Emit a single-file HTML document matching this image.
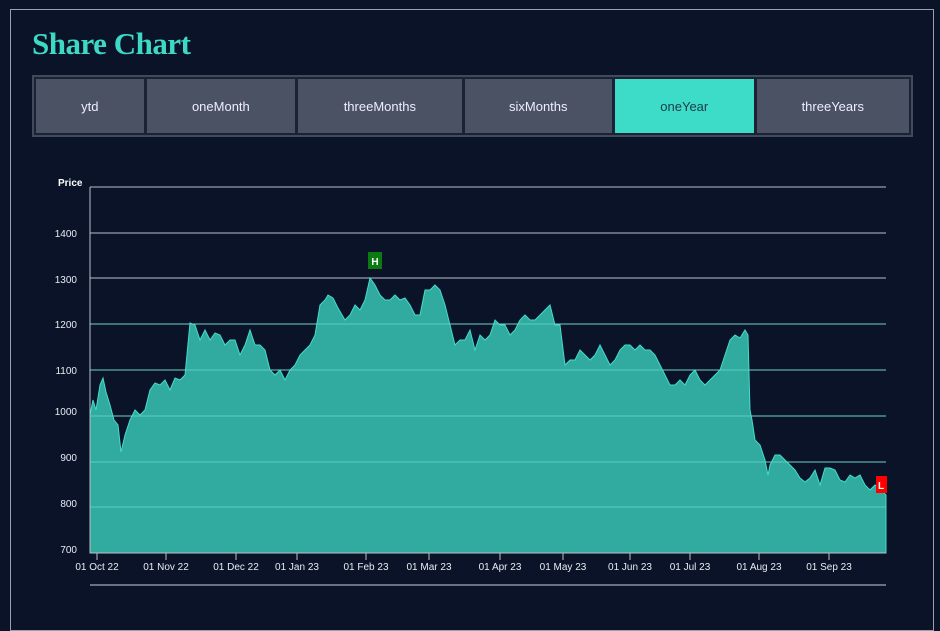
<!DOCTYPE html>
<html><head><style>
body{margin:0;background:#0a1328;width:940px;height:599px;overflow:hidden;font-family:"Liberation Sans",sans-serif}
.frame{position:absolute;left:10px;top:9px;width:922px;height:620px;border:1px solid #9aa1ad}
h1{position:absolute;left:32px;top:26px;margin:0;font-family:"Liberation Serif",serif;font-weight:bold;font-size:31px;color:#3dd9c4;letter-spacing:-0.5px}
.tabs{position:absolute;left:32px;top:75px;width:875px;height:56px;border:2px solid #3f4a5c;background:#1a2233;display:flex;gap:1px;padding:1px}
.tabs div{background:#4a5263;color:#eef;font-size:13px;display:flex;align-items:center;justify-content:center;border:1px solid #1a2233}
.tabs .on{background:#3ddcc9;color:#1f3a44}
</style></head><body>
<div class="frame"></div>
<h1>Share Chart</h1>
<div class="tabs">
<div style="width:108px">ytd</div><div style="width:149px">oneMonth</div><div style="width:164px">threeMonths</div><div style="width:148px">sixMonths</div><div class="on" style="width:139px">oneYear</div><div style="width:153px">threeYears</div>
</div>
<svg width="940" height="599" style="position:absolute;left:0;top:0" font-family="Liberation Sans,sans-serif">
<g stroke="#b9c0cc" stroke-width="1">
<line x1="90" y1="187" x2="886" y2="187"/><line x1="90" y1="233" x2="886" y2="233"/><line x1="90" y1="278" x2="886" y2="278"/><line x1="90" y1="324" x2="886" y2="324"/><line x1="90" y1="370" x2="886" y2="370"/><line x1="90" y1="416" x2="886" y2="416"/><line x1="90" y1="462" x2="886" y2="462"/><line x1="90" y1="507" x2="886" y2="507"/>
</g>
<path fill="#31aba0" stroke="#44dccb" stroke-width="1" d="M90,553 L90,415 93,400 96,410 100,385 103,378 106,392 110,405 114,420 118,425 121,452 125,435 130,420 135,410 140,415 145,410 150,390 155,383 160,385 165,380 170,390 175,378 180,380 185,375 190,323 195,325 200,340 205,330 210,340 215,333 220,335 225,345 230,340 235,340 240,355 245,345 250,330 255,345 260,345 265,350 270,370 275,375 280,370 285,380 290,370 295,365 300,355 305,350 310,345 315,335 320,305 325,300 328,295 333,298 338,308 345,320 350,315 355,305 360,310 365,300 370,278 375,285 380,295 385,300 390,300 395,295 400,300 405,298 410,305 415,315 420,315 425,290 430,290 435,285 440,290 445,305 450,325 455,345 460,340 465,340 470,330 475,350 480,335 485,340 490,335 495,320 500,325 505,325 510,335 515,330 520,320 525,315 530,320 535,320 540,315 545,310 550,305 555,325 560,325 565,365 570,360 575,360 580,350 585,355 590,360 595,355 600,345 605,355 610,365 615,360 620,350 625,345 630,345 635,350 640,345 645,350 650,350 655,355 660,365 665,375 670,385 675,385 680,380 685,385 690,375 695,370 700,380 705,385 710,380 715,375 720,370 725,355 730,340 735,335 740,338 745,330 748,335 750,410 752,420 755,440 760,445 765,460 768,475 770,465 775,455 780,455 785,460 790,465 795,470 800,478 805,482 810,478 815,470 820,485 825,468 830,468 835,470 840,480 845,482 850,475 855,478 860,475 865,485 870,490 875,485 880,490 883,492 886,495 L886,553 Z"/>
<g stroke="#62d6ca" stroke-width="1" opacity="0.8">
<line x1="90" y1="416" x2="886" y2="416"/><line x1="90" y1="462" x2="886" y2="462"/><line x1="90" y1="507" x2="886" y2="507"/><line x1="90" y1="370" x2="886" y2="370"/><line x1="90" y1="324" x2="886" y2="324"/>
</g>
<line x1="90" y1="187" x2="90" y2="553" stroke="#b9c0cc"/>
<line x1="90" y1="553" x2="886" y2="553" stroke="#b9c0cc"/>
<line x1="90" y1="585" x2="886" y2="585" stroke="#8a92a0" stroke-width="1.5"/>
<g stroke="#b9c0cc"><line x1="97" y1="553" x2="97" y2="560"/><line x1="166" y1="553" x2="166" y2="560"/><line x1="236" y1="553" x2="236" y2="560"/><line x1="297" y1="553" x2="297" y2="560"/><line x1="366" y1="553" x2="366" y2="560"/><line x1="429" y1="553" x2="429" y2="560"/><line x1="500" y1="553" x2="500" y2="560"/><line x1="563" y1="553" x2="563" y2="560"/><line x1="630" y1="553" x2="630" y2="560"/><line x1="690" y1="553" x2="690" y2="560"/><line x1="759" y1="553" x2="759" y2="560"/><line x1="829" y1="553" x2="829" y2="560"/></g>
<g fill="#e8ecf2" font-size="10" text-anchor="middle">
<text x="97" y="570">01 Oct 22</text><text x="166" y="570">01 Nov 22</text><text x="236" y="570">01 Dec 22</text><text x="297" y="570">01 Jan 23</text><text x="366" y="570">01 Feb 23</text><text x="429" y="570">01 Mar 23</text><text x="500" y="570">01 Apr 23</text><text x="563" y="570">01 May 23</text><text x="630" y="570">01 Jun 23</text><text x="690" y="570">01 Jul 23</text><text x="759" y="570">01 Aug 23</text><text x="829" y="570">01 Sep 23</text>
</g>
<g fill="#e8ecf2" font-size="10" text-anchor="end">
<text x="77" y="237">1400</text><text x="77" y="283">1300</text><text x="77" y="328">1200</text><text x="77" y="374">1100</text><text x="77" y="415">1000</text><text x="77" y="461">900</text><text x="77" y="507">800</text><text x="77" y="553">700</text>
</g>
<text x="58" y="186" fill="#fff" font-size="10" font-weight="bold">Price</text>
<rect x="368" y="252" width="14" height="17" fill="#0b7a12"/><text x="375" y="265" fill="#fff" font-size="10" font-weight="bold" text-anchor="middle">H</text>
<rect x="876" y="476" width="11" height="17" fill="#f00"/><text x="881" y="489" fill="#fff" font-size="10" font-weight="bold" text-anchor="middle">L</text>
</svg>
</body></html>
